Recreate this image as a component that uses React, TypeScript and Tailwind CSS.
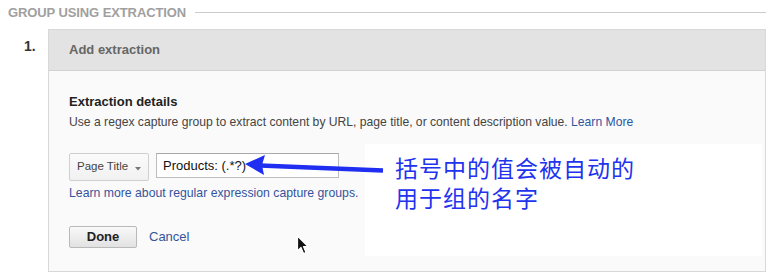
import React from "react";

export default function App() {
  return (
    <div
      className="relative w-[780px] h-[280px] bg-white overflow-hidden"
      style={{ fontFamily: '"Liberation Sans", Arial, sans-serif' }}
    >
      {/* Section heading */}
      <div className="flex items-center pt-[5px] pl-[8px] pr-[14px]">
        <span className="text-[13px] leading-[15px] font-bold text-[#a0a0a0] tracking-[-0.1px] whitespace-nowrap">
          GROUP USING EXTRACTION
        </span>
        <div className="ml-[9px] flex-1 h-px bg-[#cccccc]" />
      </div>

      {/* Step row */}
      <div className="flex mt-[9px] pr-[14px]">
        <div className="w-[48px] pl-[24px] pt-[9px] text-[14px] leading-[16px] font-bold text-[#333]">
          1.
        </div>
        <div className="flex-1 border border-[#d8d8d8] h-[243px] flex flex-col">
          <div className="h-[41px] bg-[#e3e3e3] border-b border-[#d2d2d2] flex items-center pl-[20px]">
            <span className="text-[13px] font-bold text-[#666]">Add extraction</span>
          </div>
          <div className="flex-1 bg-[#fafafa] pl-[20px] pt-[23px] flex flex-col">
            <div className="text-[13px] leading-[16px] font-bold text-[#222]">Extraction details</div>
            <div className="mt-[4px] text-[12.15px] leading-[16px] text-[#444] whitespace-nowrap">
              Use a regex capture group to extract content by URL, page title, or content description value.{" "}
              <span className="text-[#2d56a0]">Learn More</span>
            </div>
            <div className="mt-[23px] flex items-start gap-[7px]">
              <div className="w-[80px] h-[28px] border border-[#cfcfcf] rounded-[2px] bg-gradient-to-b from-[#fbfbfb] to-[#f1f1f1] flex items-center pl-[7px] pr-[7px]">
                <span className="text-[11.5px] text-[#444] whitespace-nowrap">Page Title</span>
                <svg className="ml-auto mt-[3px]" width="6" height="4" viewBox="0 0 6 4">
                  <path d="M0 0 L6 0 L3 3.5 Z" fill="#777" />
                </svg>
              </div>
              <div className="w-[183px] h-[25px] border border-[#bdbdbd] border-t-[#a8a8a8] bg-white flex items-center pl-[6px]">
                <span className="text-[13px] text-[#111] whitespace-nowrap">Products: (.*?)</span>
              </div>
            </div>
            <div className="mt-[5px] text-[12.25px] leading-[15px] text-[#35549c] whitespace-nowrap">
              Learn more about regular expression capture groups.
            </div>
            <div className="mt-[25px] flex items-center">
              <button className="w-[68px] h-[22px] border border-[#b9b9b9] rounded-[2px] bg-gradient-to-b from-[#f9f9f9] to-[#e2e2e2] text-[13px] font-bold text-[#222]">
                Done
              </button>
              <span className="ml-[12px] text-[13px] text-[#35549c]">Cancel</span>
            </div>
          </div>
        </div>
      </div>

      {/* Annotation box */}
      <div className="absolute left-[365px] top-[144px] w-[397px] h-[112px] bg-white pl-[30px] pt-[8px]">
        <div
          className="text-[23px] leading-[30px] text-[#2233ee] tracking-[1px] whitespace-nowrap"
          style={{ fontFamily: '"Noto Sans CJK SC", "Liberation Sans", sans-serif' }}
        >
          括号中的值会被自动的
          <br />
          用于组的名字
        </div>
      </div>

      {/* Arrow */}
      <svg className="absolute left-0 top-0" width="780" height="280" viewBox="0 0 780 280">
        <line x1="260" y1="165.5" x2="383" y2="170.5" stroke="#1f2ef0" strokeWidth="4.5" />
        <path d="M245 164 L265 155 L262 165 L264 175 Z" fill="#1f2ef0" />
      </svg>

      {/* Mouse cursor */}
      <svg className="absolute left-[296px] top-[235px]" width="14" height="21" viewBox="0 0 14 21">
        <path
          d="M1.5 1 L1.5 16 L5 12.5 L7.5 18.5 L10 17.5 L7.5 11.5 L12 11.5 Z"
          fill="#111"
          stroke="#fff"
          strokeWidth="1.2"
          strokeLinejoin="round"
        />
      </svg>
    </div>
  );
}
